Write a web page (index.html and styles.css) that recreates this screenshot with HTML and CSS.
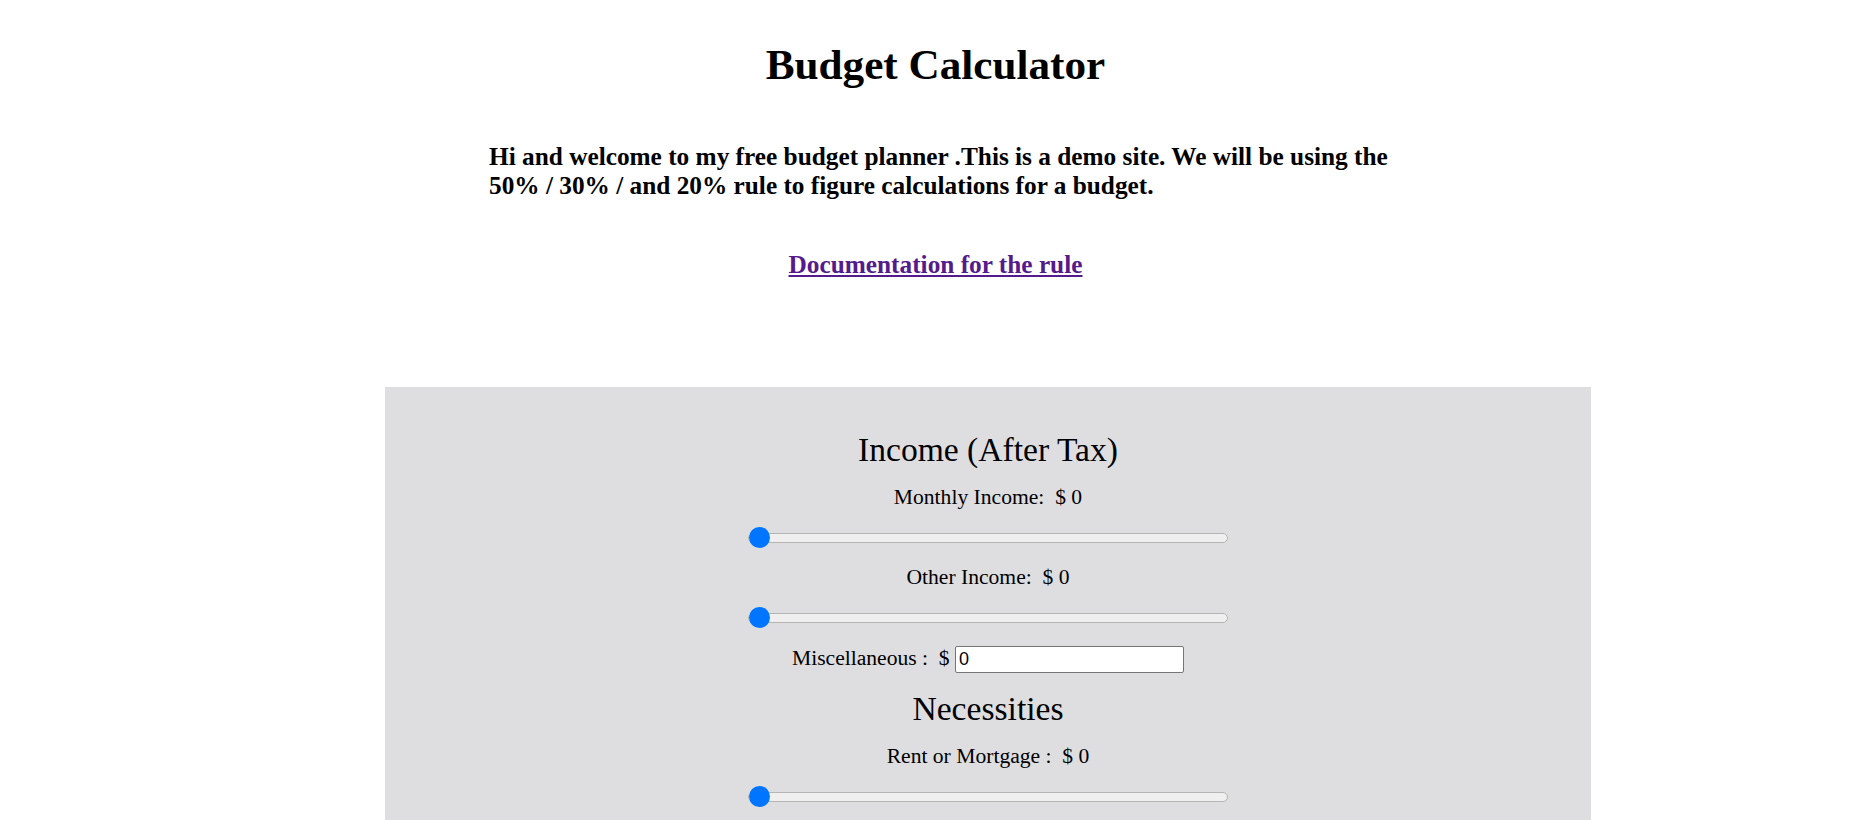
FILE: index.html
```html
<!DOCTYPE html>
<html lang="en">
<head>
<meta charset="utf-8">
<title>Budget Calculator</title>
<link rel="stylesheet" href="styles.css">
</head>
<body>
<div class="page">
  <h1 class="title">Budget Calculator</h1>
  <h3 class="intro">Hi and welcome to my free budget planner .This is a demo site. We will be using the 50% / 30% / and 20% rule to figure calculations for a budget.</h3>
  <h3 class="doc"><a class="doc-link" href="#rule">Documentation for the rule</a></h3>

  <div class="panel">
    <h2 class="section-title first">Income (After Tax)</h2>
    <div class="label">Monthly Income: &nbsp;$ 0</div>
    <input class="slider" type="range" min="0" max="10000" value="0">
    <div class="label">Other Income: &nbsp;$ 0</div>
    <input class="slider" type="range" min="0" max="10000" value="0">
    <div class="misc-row">Miscellaneous : &nbsp;$ <input class="misc-input" type="text" value="0"></div>

    <h2 class="section-title">Necessities</h2>
    <div class="label">Rent or Mortgage : &nbsp;$ 0</div>
    <input class="slider" type="range" min="0" max="10000" value="0">
  </div>
</div>
</body>
</html>
```

FILE: styles.css
```css
html, body {
  margin: 0;
  padding: 0;
  background: #ffffff;
}

body {
  font-family: "Liberation Serif", "Times New Roman", serif;
  color: #000000;
  font-size: 21.6px;
}

.page {
  padding: 0 8px;
  display: flow-root;
}

.title {
  margin: 0;
  padding-top: 40px;
  font-size: 43.2px;
  line-height: 50px;
  font-weight: bold;
  text-align: center;
}

.intro {
  margin: 52px 0 0 481px;
  width: 920px;
  font-size: 25.3px;
  line-height: 29px;
  font-weight: bold;
}

.doc {
  margin: 50px 0 0 0;
  font-size: 25.3px;
  line-height: 29px;
  font-weight: bold;
  text-align: center;
}

.doc-link {
  color: #551a8b;
  text-decoration: underline;
}

.panel {
  margin: 108px 0 0 377px;
  width: 1206px;
  background: #dedee0;
  padding: 44px 0 60px 0;
  display: flex;
  flex-direction: column;
  align-items: center;
}

.section-title {
  margin: 17px 0 0 0;
  font-size: 33.6px;
  line-height: 38px;
  font-weight: normal;
}

.section-title.first {
  margin-top: 0;
}

.label {
  margin-top: 16px;
  line-height: 25px;
  white-space: pre;
}

.slider {
  -webkit-appearance: none;
  appearance: none;
  margin: 17px 0 1px 0;
  padding: 0;
  width: 480px;
  height: 21px;
  background: transparent;
}

.slider::-webkit-slider-runnable-track {
  height: 10px;
  box-sizing: border-box;
  background: #efefef;
  border: 1px solid #b5b5b5;
  border-radius: 5px;
}

.slider::-webkit-slider-thumb {
  -webkit-appearance: none;
  appearance: none;
  width: 21px;
  height: 21px;
  margin-top: -6.5px;
  border-radius: 50%;
  background: #0075ff;
  border: none;
}

.misc-row {
  margin-top: 16px;
  line-height: 27px;
}

.misc-input {
  box-sizing: border-box;
  width: 229px;
  height: 27px;
  margin: 0;
  padding: 1px 3px;
  font-family: "Liberation Sans", Arial, sans-serif;
  font-size: 18px;
  color: #000000;
  background: #ffffff;
  border: 1px solid #767676;
  border-radius: 2px;
  vertical-align: baseline;
}
```
